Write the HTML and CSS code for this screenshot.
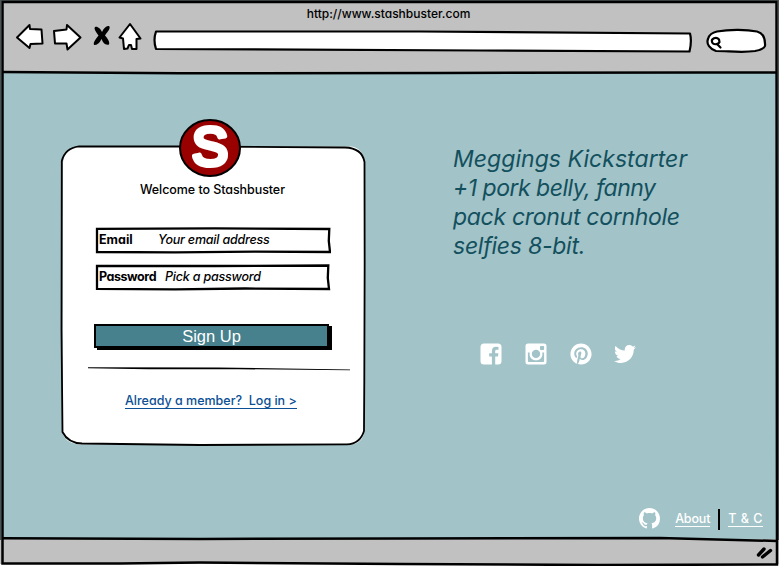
FILE: index.html
```
<!DOCTYPE html>
<html lang="en">
<head>
<meta charset="utf-8">
<title>Stashbuster</title>
<link rel="stylesheet" href="styles.css">
</head>
<body>
<div class="browser">
  <header class="chrome">
    <p class="title">http://www.stashbuster.com</p>
    <div class="toolbar">
      <svg class="nav-icons" viewBox="12 20 132 34" width="132" height="34">
        <g fill="#fff" stroke="#000" stroke-width="2" stroke-linejoin="round">
          <path d="M17 37.5 29.5 25 30 29 41.5 29.5 42.5 43.5 30.5 44 29.5 48Z"/>
          <path d="M54 31 66.500 29.500 67 25 80.500 37.500 67.500 49.500 66.500 43.500 55 43.500Z"/>
          <path d="M130 24 119.500 37.500 123 38.500 124 49 127.500 48.500 129 45 131 45 132 49 136.500 49 136.500 39 140.500 38.500Z"/>
        </g>
        <path d="M94.500 28c1-3 6 0 7.500 4 2-4 5-7 7.500-5.500 1 3-3 6-4.500 9 3 3 5 7 4 9-4 1-6-2-7.500-5.500-2 4-4 6-7.500 6-1-3 2-6 4.500-9.500-2-3-4-5-4-7.500Z"/>
      </svg>
      <svg class="address" viewBox="152 26 541 30" width="541" height="30">
        <path d="M156 31.500 420 31.500 690 33.500Q692 41 689.500 51.500L480 50.500 156 49Q153 40 156 31.500Z" fill="#fff" stroke="#000" stroke-width="2.200" stroke-linejoin="round"/>
      </svg>
      <svg class="search" viewBox="705 26 64 30" width="64" height="30">
        <path d="M717 31.500C730 29 747 29.500 757 31.500 763 33 765.500 38 765 46 764 49 760 50 755 51 742 53 729 51 716 51 710 49 706 44 708 39 709 35 712 32.500 717 31.500Z" fill="#fff" stroke="#000" stroke-width="2.200"/>
        <path d="M719 39.500C716 36 711 39 712 42 713 45 718 45 719.500 42ZM717 44l3.500 3.500" fill="none" stroke="#000" stroke-width="2.200" stroke-linecap="round"/>
      </svg>
    </div>
  </header>

  <main class="page">
    <section class="card">
      <svg class="card-outline" viewBox="60 144 308 304" width="308" height="304">
        <path d="M63 163Q64 147 80 146.500L350 146.500Q363 147 364.500 163L364.500 430Q363 444 350 444.500L80 444.500Q63 443 62.500 430Z" fill="#fff"/>
        <path d="M79 146.300 180 146.500 345 147.500Q362 148 364.500 162C364.500 240 365 300 364.300 380L364 431Q360 444 347 444.300L200 445 82 443.500Q68 443 62.500 432L61.500 330 61.800 161Q65 148 79 146.300Z" fill="none" stroke="#000" stroke-width="1.800"/>
      </svg>
      <svg class="logo" viewBox="0 0 62 58" width="62" height="58">
        <ellipse cx="31" cy="29" rx="30" ry="28" fill="#900" stroke="#000" stroke-width="2"/>
        <text class="logo-letter" transform="translate(31 45.500)" text-anchor="middle">S</text>
      </svg>
      <h1 class="welcome">Welcome to Stashbuster</h1>
      <form class="form">
        <div class="field">
          <svg class="sketch" viewBox="0 0 236 27" width="236" height="27"><path d="M2 1.800 120 1.300 234.300 2 233.800 14 235 25 160 24.700 80 25.300 2 25Z" fill="#fff" stroke="#000" stroke-width="2.300"/></svg>
          <label class="label email">Email</label><span class="hint email-hint">Your email address</span>
        </div>
        <div class="field">
          <svg class="sketch" viewBox="0 0 236 27" width="236" height="27"><path d="M2 1.800 120 2 233.300 1.500 232.800 14 234 25 150 24.500 80 25.300 2 24.800Z" fill="#fff" stroke="#000" stroke-width="2.300"/></svg>
          <label class="label password">Password</label><span class="hint password-hint">Pick a password</span>
        </div>
        <button class="submit" type="button"><span>Sign Up</span></button>
      </form>
      <svg class="rule" viewBox="0 0 262 4" width="262" height="4"><path d="M0 .300 130 .500 262 2.400 262 3.300 150 2.200 60 2.200 0 1.300Z"/></svg>
      <a class="login">Already a member?&nbsp; Log in &gt;</a>
    </section>

    <section class="aside">
      <p class="pitch"><span class="l1">Meggings Kickstarter</span><span class="l2">+1 pork belly, fanny</span><span class="l3">pack cronut cornhole</span><span class="l4">selfies 8-bit.</span></p>
      <div class="social">
        <svg viewBox="0 0 22 22"><path fill-rule="evenodd" d="M4 .5H18Q21.500.500 21.500 4V18Q21.500 21.500 18 21.500H15.200V13.400H18L18.400 10.200H15.200V8.200C15.200 7.200 15.600 6.700 16.800 6.700H18.500V3.900L16 3.700C13.500 3.700 11.900 5.200 11.900 7.900V10.200H9.200V13.400H11.900V21.500H4Q.5 21.500.5 18V4Q.5.500 4 .5Z"/></svg>
        <svg viewBox="0 0 22 22"><path fill-rule="evenodd" d="M3 .5H19Q21.500.500 21.500 3V19Q21.500 21.500 19 21.500H3Q.5 21.500.5 19V3Q.5.500 3 .5ZM15.800 3Q15 3 15 3.800V6.200Q15 7 15.800 7H18.300Q19.100 7 19.100 6.200V3.800Q19.100 3 18.300 3ZM2.900 9.400V18Q2.900 19 3.900 19H18.100Q19.100 19 19.100 18V9.400H17.200C18.300 13.600 15.200 17.300 11 17.300S3.700 13.600 4.800 9.400ZM11 6.800A4.200 4.100 0 1 0 11 15 4.200 4.100 0 1 0 11 6.800Z"/></svg>
        <svg viewBox="-.5 -.5 25 25"><path d="M12 0C5.373 0 0 5.372 0 12c0 5.084 3.163 9.426 7.627 11.174-.105-.949-.2-2.405.042-3.441.218-.937 1.407-5.965 1.407-5.965s-.359-.719-.359-1.782c0-1.668.967-2.914 2.171-2.914 1.023 0 1.518.769 1.518 1.690 0 1.029-.655 2.568-.994 3.995-.283 1.194.599 2.169 1.777 2.169 2.133 0 3.772-2.249 3.772-5.495 0-2.873-2.064-4.882-5.012-4.882-3.414 0-5.418 2.561-5.418 5.207 0 1.031.397 2.138.893 2.738a.36.36 0 0 1 .083.345l-.333 1.360c-.053.220-.174.267-.402.161-1.499-.698-2.436-2.889-2.436-4.649 0-3.785 2.750-7.262 7.929-7.262 4.163 0 7.398 2.967 7.398 6.931 0 4.136-2.607 7.464-6.227 7.464-1.216 0-2.359-.631-2.750-1.378l-.748 2.853c-.271 1.043-1.002 2.350-1.492 3.146C9.570 23.812 10.763 24 12 24c6.627 0 12-5.373 12-12S18.627 0 12 0z"/></svg>
        <svg class="bird" viewBox="0 0 512 512"><path d="M459.370 151.716c.325 4.548.325 9.097.325 13.645 0 138.720-105.583 298.558-298.558 298.558-59.452 0-114.680-17.219-161.137-47.106 8.447.974 16.568 1.299 25.340 1.299 49.055 0 94.213-16.568 130.274-44.832-46.132-.975-84.792-31.188-98.112-72.772 6.498.974 12.995 1.624 19.818 1.624 9.421 0 18.843-1.300 27.614-3.573-48.081-9.747-84.143-51.980-84.143-102.985v-1.299c13.969 7.797 30.214 12.670 47.431 13.319-28.264-18.843-46.781-51.005-46.781-87.391 0-19.492 5.197-37.360 14.294-52.954 51.655 63.675 129.300 105.258 216.365 109.807-1.624-7.797-2.599-15.918-2.599-24.040 0-57.828 46.782-104.934 104.934-104.934 30.213 0 57.502 12.670 76.670 33.137 23.715-4.548 46.456-13.320 66.599-25.340-7.798 24.366-24.366 44.833-46.132 57.827 21.117-2.273 41.584-8.122 60.426-16.243-14.292 20.791-32.161 39.308-52.628 54.253z"/></svg>
      </div>
    </section>
    <nav class="site-links">
      <svg class="github" viewBox="0 0 16 16"><path d="M8 0C3.580 0 0 3.580 0 8c0 3.540 2.290 6.530 5.470 7.590.4.070.55-.17.55-.38 0-.19-.01-.82-.01-1.490-2.010.37-2.530-.49-2.690-.94-.09-.23-.48-.94-.82-1.130-.28-.15-.68-.52-.01-.53.63-.01 1.080.58 1.230.82.72 1.210 1.870.87 2.330.66.070-.52.28-.87.51-1.070-1.780-.2-3.640-.89-3.640-3.950 0-.87.31-1.590.82-2.150-.08-.2-.36-1.020.08-2.120 0 0 .67-.21 2.200.82.64-.18 1.320-.27 2-.27s1.360.090 2 .27c1.530-1.040 2.200-.82 2.200-.82.44 1.100.16 1.920.08 2.120.51.56.82 1.270.82 2.150 0 3.070-1.870 3.750-3.650 3.950.29.25.54.73.54 1.480 0 1.070-.01 1.930-.01 2.200 0 .21.15.46.55.38A8.010 8.010 0 0 0 16 8c0-4.420-3.580-8-8-8z"/></svg>
      <a class="link about">About</a>
      <span class="divider"></span>
      <a class="link terms">T &amp; C</a>
    </nav>
  </main>

  <footer class="status">
    <svg viewBox="0 0 20 16" width="20" height="16"><path d="M3.500 10 9 4M7.500 12 15.500 5.500" stroke="#000" stroke-width="3.400" stroke-linecap="round"/></svg>
  </footer>
  <svg class="frame" viewBox="0 0 779 566" width="779" height="566" fill="none" stroke="#000">
    <path d="M0 .5H779M.5 0V540M778.500 0V540" stroke="#4c5555" stroke-width="1"/>
    <path d="M2.500 2H776.500L777 564.500 600 565 400 564 200 562.500 120 563.500 2.500 563.500Z" stroke-width="2.500"/>
    <path d="M3 72 180 73.300 440 73 700 72.500 777 72.500M3 538.300 200 539 400 538.500 660 538 777 541" stroke-width="2.500"/>
  </svg>
</div>
</body>
</html>
```

FILE: styles.css
```
* { box-sizing: border-box; }

body {
  margin: 0;
  background: #fff;
  font-family: Inter, "Liberation Sans", sans-serif;
  font-feature-settings: "cv11";
  font-size: 12.5px;
  font-weight: 500;
  line-height: 16px;
  color: #000;
}

h1, p { margin: 0; font-weight: inherit; }

.browser {
  position: relative;
  display: grid;
  grid-template-rows: 73px 466px 25px;
  width: 779px;
  height: 566px;
  overflow: hidden;
}

.frame { position: absolute; inset: 0; pointer-events: none; }

.chrome { background: #c1c1c1; padding-top: 6px; }

.title { padding-right: 2px; text-align: center; font-size: 12px; }

.toolbar {
  display: flex;
  align-items: flex-start;
  padding-left: 12px;
}
.nav-icons { margin-top: -2px; }
.address { margin: 4px 0 0 8px; }
.search { margin: 4px 0 0 12px; }

.page {
  display: grid;
  grid-template-columns: 308px 1fr;
  grid-template-rows: 1fr 30px;
  column-gap: 85px;
  padding: 46px 16px 5px 60px;
  background: #a2c3c8;
}

.card {
  position: relative;
  display: flex;
  flex-direction: column;
  align-items: flex-start;
}
.card-outline { position: absolute; left: 0; top: 25px; }

.logo { position: relative; margin-left: 119px; overflow: visible; }
.logo-letter {
  fill: #fff;
  stroke: #fff;
  stroke-width: 5px;
  stroke-linejoin: round;
  font-family: "Liberation Sans", sans-serif;
  font-size: 54px;
  font-weight: 400;
}

.welcome {
  position: relative;
  margin: 5px 0 0 80px;
  font-size: 12.5px;
  letter-spacing: -.07px;
  white-space: nowrap;
}

.form { position: relative; margin: 29px 0 0 35px; }

.field {
  position: relative;
  display: flex;
  align-items: center;
  width: 236px;
  height: 27px;
  padding: 0 0 2px 4px;
  margin-bottom: 10px;
  white-space: nowrap;
}
.sketch { position: absolute; left: 0; top: 0; }
.label { position: relative; font-weight: 700; }
.email { width: 59px; }
.password { width: 66px; letter-spacing: -.45px; }
.hint { position: relative; font-style: italic; letter-spacing: -.2px; }

.submit {
  display: block;
  width: 235px;
  height: 24px;
  margin: 33px 0 0 -1px;
  padding: 0;
  border: 2px solid #000;
  background: #47818e;
  box-shadow: 3px 2px 0 #000;
  color: #fff;
  font: 16.500px/20px "Liberation Sans", sans-serif;
}

.rule { position: relative; margin: 19px 0 0 28px; }

.login {
  position: relative;
  margin: 22px 0 0 65px;
  border-bottom: 1px solid #0b4f94;
  color: #0b4f94;
  line-height: 15px;
  white-space: nowrap;
}

.aside { padding-top: 26px; }

.pitch {
  display: flex;
  flex-direction: column;
  align-items: flex-start;
  color: #13505e;
  font-size: 23px;
  font-style: italic;
  font-weight: 450;
  line-height: 29px;
  white-space: nowrap;
}
.l1 { letter-spacing: .05px; }
.l2 { letter-spacing: -.5px; }
.l3 { letter-spacing: -.3px; }
.l4 { letter-spacing: -.25px; }

.social { display: flex; gap: 23px; margin: 82px 0 0 27px; }
.social svg { width: 22px; height: 22px; fill: #fff; }
.social .bird { margin-left: -1px; }

.site-links {
  grid-column: 1 / -1;
  display: flex;
  justify-content: flex-end;
  align-items: center;
  color: #fff;
}
.github { width: 21px; height: 21px; margin: -1px 15px 0 0; fill: #fff; }
.link { border-bottom: 1px solid #fff; line-height: 14px; white-space: nowrap; }
.about { letter-spacing: -.15px; }
.terms { letter-spacing: .5px; }
.divider { width: 2px; height: 21px; margin: 1px 8px 0; background: #000; }

.status {
  display: flex;
  justify-content: flex-end;
  padding: 6px 4px 0 0;
  background: #c1c1c1;
}
```
